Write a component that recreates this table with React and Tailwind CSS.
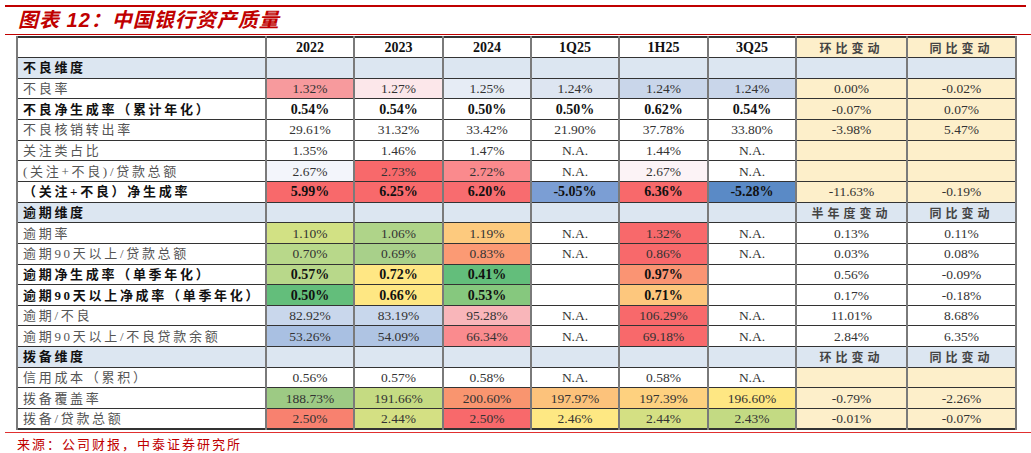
import React from "react";

const W = "bg-white";
const BLUE = "bg-[#dce6f1]";
const YEL = "bg-[#fdefca]";

const cols = ["2022", "2023", "2024", "1Q25", "1H25", "3Q25"];

const rows = [
  { section: true, label: "不良维度", chg: ["", ""] },
  {
    label: "不良率",
    vals: [
      ["1.32%", "bg-[#f79a9d]"],
      ["1.27%", "bg-[#fce7ea]"],
      ["1.25%", "bg-[#e6ecf5]"],
      ["1.24%", "bg-[#dde5f1]"],
      ["1.24%", "bg-[#c9d6ea]"],
      ["1.24%", "bg-[#c9d6ea]"],
    ],
    chg: ["0.00%", "-0.02%"],
    chgBg: YEL,
  },
  {
    label: "不良净生成率（累计年化）",
    bold: true,
    vals: [
      ["0.54%", W],
      ["0.54%", W],
      ["0.50%", W],
      ["0.50%", W],
      ["0.62%", W],
      ["0.54%", W],
    ],
    chg: ["-0.07%", "0.07%"],
    chgBg: YEL,
  },
  {
    label: "不良核销转出率",
    vals: [
      ["29.61%", W],
      ["31.32%", W],
      ["33.42%", W],
      ["21.90%", W],
      ["37.78%", W],
      ["33.80%", W],
    ],
    chg: ["-3.98%", "5.47%"],
    chgBg: YEL,
  },
  {
    label: "关注类占比",
    vals: [
      ["1.35%", W],
      ["1.46%", W],
      ["1.47%", W],
      ["N.A.", W],
      ["1.44%", W],
      ["N.A.", W],
    ],
    chg: ["", ""],
    chgBg: YEL,
  },
  {
    label: "(关注+不良)/贷款总额",
    vals: [
      ["2.67%", "bg-[#f3f5fb]"],
      ["2.73%", "bg-[#f8696b]"],
      ["2.72%", "bg-[#fa8a8d]"],
      ["N.A.", W],
      ["2.67%", "bg-[#fcf3f6]"],
      ["N.A.", W],
    ],
    chg: ["", ""],
    chgBg: YEL,
  },
  {
    label: "（关注+不良）净生成率",
    bold: true,
    vals: [
      ["5.99%", "bg-[#f8696b]"],
      ["6.25%", "bg-[#f8696b]"],
      ["6.20%", "bg-[#f86c6f]"],
      ["-5.05%", "bg-[#7b9ed4]"],
      ["6.36%", "bg-[#f8696b]"],
      ["-5.28%", "bg-[#5a8ac6]"],
    ],
    chg: ["-11.63%", "-0.19%"],
    chgBg: YEL,
  },
  { section: true, label: "逾期维度", chg: ["半年度变动", "同比变动"] },
  {
    label: "逾期率",
    vals: [
      ["1.10%", "bg-[#d2e184]"],
      ["1.06%", "bg-[#afd489]"],
      ["1.19%", "bg-[#fdca7e]"],
      ["N.A.", W],
      ["1.32%", "bg-[#f8696b]"],
      ["N.A.", W],
    ],
    chg: ["0.13%", "0.11%"],
    chgBg: W,
  },
  {
    label: "逾期90天以上/贷款总额",
    vals: [
      ["0.70%", "bg-[#b8d88a]"],
      ["0.69%", "bg-[#a8d08a]"],
      ["0.83%", "bg-[#fb9a74]"],
      ["N.A.", W],
      ["0.86%", "bg-[#f8696b]"],
      ["N.A.", W],
    ],
    chg: ["0.03%", "0.08%"],
    chgBg: W,
  },
  {
    label: "逾期净生成率（单季年化）",
    bold: true,
    vals: [
      ["0.57%", "bg-[#b8d88a]"],
      ["0.72%", "bg-[#ffe784]"],
      ["0.41%", "bg-[#63be7b]"],
      ["", W],
      ["0.97%", "bg-[#fa9473]"],
      ["", W],
    ],
    chg: ["0.56%", "-0.09%"],
    chgBg: W,
  },
  {
    label: "逾期90天以上净成率（单季年化）",
    bold: true,
    vals: [
      ["0.50%", "bg-[#63be7b]"],
      ["0.66%", "bg-[#fee783]"],
      ["0.53%", "bg-[#86c87e]"],
      ["", W],
      ["0.71%", "bg-[#fdc77d]"],
      ["", W],
    ],
    chg: ["0.17%", "-0.18%"],
    chgBg: W,
  },
  {
    label: "逾期/不良",
    vals: [
      ["82.92%", "bg-[#c9d7ec]"],
      ["83.19%", "bg-[#c8d7ec]"],
      ["95.28%", "bg-[#f9b6ba]"],
      ["N.A.", W],
      ["106.29%", "bg-[#f8696b]"],
      ["N.A.", W],
    ],
    chg: ["11.01%", "8.68%"],
    chgBg: W,
  },
  {
    label: "逾期90天以上/不良贷款余额",
    vals: [
      ["53.26%", "bg-[#a9c0e2]"],
      ["54.09%", "bg-[#afc4e3]"],
      ["66.34%", "bg-[#fa8b8e]"],
      ["N.A.", W],
      ["69.18%", "bg-[#f8696b]"],
      ["N.A.", W],
    ],
    chg: ["2.84%", "6.35%"],
    chgBg: W,
  },
  { section: true, label: "拨备维度", chg: ["环比变动", "同比变动"] },
  {
    label: "信用成本（累积）",
    vals: [
      ["0.56%", W],
      ["0.57%", W],
      ["0.58%", W],
      ["N.A.", W],
      ["0.58%", W],
      ["N.A.", W],
    ],
    chg: ["", ""],
    chgBg: YEL,
  },
  {
    label: "拨备覆盖率",
    vals: [
      ["188.73%", "bg-[#9dca84]"],
      ["191.66%", "bg-[#c5db82]"],
      ["200.60%", "bg-[#f9956f]"],
      ["197.97%", "bg-[#fcc27b]"],
      ["197.39%", "bg-[#fed17f]"],
      ["196.60%", "bg-[#fee783]"],
    ],
    chg: ["-0.79%", "-2.26%"],
    chgBg: YEL,
  },
  {
    label: "拨备/贷款总额",
    vals: [
      ["2.50%", "bg-[#f8816f]"],
      ["2.44%", "bg-[#d4e083]"],
      ["2.50%", "bg-[#f8696b]"],
      ["2.46%", "bg-[#fee883]"],
      ["2.44%", "bg-[#d4e083]"],
      ["2.43%", "bg-[#c3da83]"],
    ],
    chg: ["-0.01%", "-0.07%"],
    chgBg: YEL,
  },
];

const cell =
  "border-y border-y-[#333] border-x-2 border-x-[#7a7a7a] p-0 text-center align-middle leading-[15px]";

function LabelCell({ children, bold }) {
  return (
    <td
      className={`${cell} text-left pl-[5px] text-[13px] tracking-[2.7px] whitespace-nowrap ${
        bold ? "font-bold text-[#111]" : "text-[#555]"
      }`}
    >
      {children}
    </td>
  );
}

function ChangeHead({ children, bg }) {
  return (
    <td
      className={`${cell} ${bg} text-[12px] tracking-[4px] font-bold text-[#444] font-['Noto_Sans_CJK_SC',sans-serif]`}
    >
      {children}
    </td>
  );
}

export default function App() {
  return (
    <div className="w-[1031px] h-[453px] bg-white overflow-hidden font-['Liberation_Serif','Noto_Sans_CJK_SC',serif]">
      <div className="ml-[5px] mr-[5px] mt-[5px] h-[2px] bg-[#c00000]" />
      <div className="ml-[5px] pl-[13px] h-[27px] leading-[27px] text-[20px] font-bold italic tracking-[1px] text-[#c00000] font-['Liberation_Sans','Noto_Sans_CJK_SC',sans-serif]">
        图表 12：中国银行资产质量
      </div>
      <div className="ml-[5px] h-px bg-[#c00000]" />

      <table className="ml-[16px] mt-px w-[999px] table-fixed border-collapse border-2 border-[#333]">
        <colgroup>
          <col className="w-[249px]" />
          <col className="w-[88px]" />
          <col className="w-[89px]" />
          <col className="w-[88px]" />
          <col className="w-[88px]" />
          <col className="w-[89px]" />
          <col className="w-[88px]" />
          <col className="w-[111px]" />
          <col className="w-[109px]" />
        </colgroup>
        <tbody>
          <tr className="h-[20.65px]">
            <td className={`${cell} bg-white`} />
            {cols.map((c) => (
              <td key={c} className={`${cell} bg-white text-[14px] font-bold text-[#111]`}>
                {c}
              </td>
            ))}
            <ChangeHead bg={YEL}>环比变动</ChangeHead>
            <ChangeHead bg={YEL}>同比变动</ChangeHead>
          </tr>
          {rows.map((r, i) =>
            r.section ? (
              <tr key={i} className={`h-[20.65px] ${BLUE}`}>
                <LabelCell bold>{r.label}</LabelCell>
                {cols.map((c) => (
                  <td key={c} className={cell} />
                ))}
                <ChangeHead bg={BLUE}>{r.chg[0]}</ChangeHead>
                <ChangeHead bg={BLUE}>{r.chg[1]}</ChangeHead>
              </tr>
            ) : (
              <tr key={i} className="h-[20.65px]">
                <LabelCell bold={r.bold}>{r.label}</LabelCell>
                {r.vals.map(([v, bg], j) => (
                  <td
                    key={j}
                    className={`${cell} ${bg} ${
                      r.bold ? "text-[14px] font-bold text-[#111]" : "text-[13.5px] text-[#333]"
                    }`}
                  >
                    {v}
                  </td>
                ))}
                {r.chg.map((v, j) => (
                  <td key={"c" + j} className={`${cell} ${r.chgBg} text-[13.5px] text-[#333]`}>
                    {v}
                  </td>
                ))}
              </tr>
            )
          )}
        </tbody>
      </table>

      <div className="ml-[5px] mt-[2px] h-px bg-[#e03030]" />
      <div className="pl-[17px] mt-[3px] text-[13px] leading-[16px] tracking-[2px] text-[#c00000] font-['Noto_Sans_CJK_SC',sans-serif]">
        来源：公司财报，中泰证券研究所
      </div>
    </div>
  );
}
